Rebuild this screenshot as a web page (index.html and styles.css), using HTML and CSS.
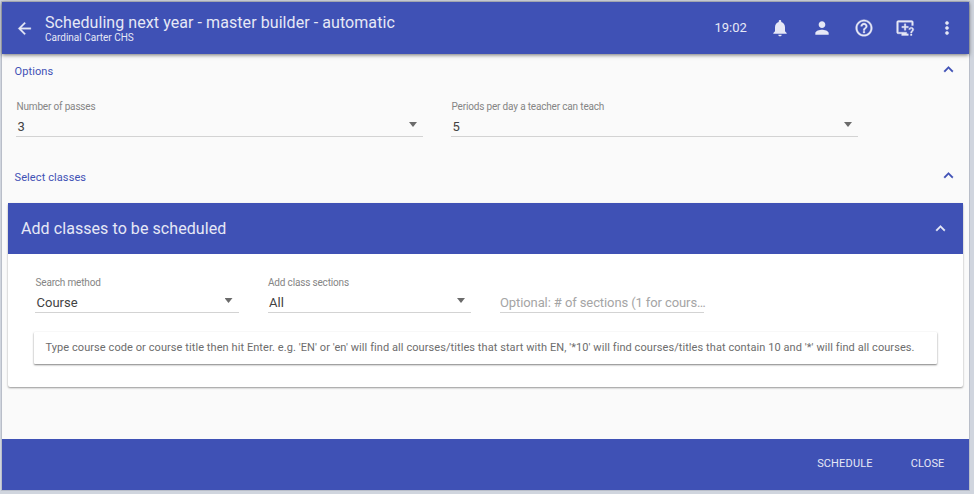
FILE: index.html
```html
<!DOCTYPE html>
<html lang="en">
<head>
<meta charset="utf-8">
<title>Scheduling next year</title>
<link rel="stylesheet" href="styles.css">
</head>
<body>
<div class="window">
  <header class="toolbar">
    <svg class="back" viewBox="0 0 24 24"><path d="M20 11H7.83l5.59-5.59L12 4l-8 8 8 8 1.41-1.41L7.83 13H20v-2z"/></svg>
    <div class="titles">
      <h1 class="title"><span>Scheduling next year - master builder - automatic</span></h1>
      <div class="subtitle"><span>Cardinal Carter CHS</span></div>
    </div>
    <span class="clock">19:02</span>
    <nav class="actions">
      <svg viewBox="0 0 24 24"><path d="M12 22c1.1 0 2-.9 2-2h-4c0 1.1.89 2 2 2zm6-6v-5c0-3.07-1.64-5.64-4.5-6.32V4c0-.83-.67-1.5-1.5-1.5s-1.5.67-1.5 1.5v.68C7.63 5.36 6 7.92 6 11v5l-2 2v1h16v-1l-2-2z"/></svg>
      <svg viewBox="0 0 24 24"><path d="M12 12c2.21 0 4-1.79 4-4s-1.79-4-4-4-4 1.79-4 4 1.79 4 4 4zm0 2c-2.67 0-8 1.34-8 4v2h16v-2c0-2.66-5.33-4-8-4z"/></svg>
      <svg class="bold" viewBox="0 0 24 24"><path d="M11 18h2v-2h-2v2zm1-16C6.48 2 2 6.48 2 12s4.48 10 10 10 10-4.48 10-10S17.52 2 12 2zm0 18c-4.41 0-8-3.59-8-8s3.59-8 8-8 8 3.59 8 8-3.59 8-8 8zm0-14c-2.21 0-4 1.79-4 4h2c0-1.1.9-2 2-2s2 .9 2 2c0 2-3 1.75-3 5h2c0-2.25 3-2.5 3-5 0-2.21-1.79-4-4-4z"/></svg>
      <svg class="bold" viewBox="0 0 24 24"><path d="M4 3h16c1.100 0 2 .9 2 2v4h-2V5H4v12h10v2h2v2H8v-2H4c-1.100 0-2-.9-2-2V5c0-1.100.9-2 2-2z"/><path d="M11.200 7h1.800v3h3v1.800h-3v3h-1.800v-3h-3V10h3z"/><path d="M19.500 11c-1.800 0-3 1.200-3 2.900h1.800c0-.7.500-1.200 1.200-1.200s1.200.5 1.200 1.200c0 1.300-2.100 1.700-2.100 4.200h1.800c0-1.700 2.100-2.100 2.100-4.200 0-1.700-1.200-2.900-3-2.900zM18.600 19.300h1.800V21h-1.800z"/></svg>
      <svg class="bold" viewBox="0 0 24 24"><path d="M12 8c1.1 0 2-.9 2-2s-.9-2-2-2-2 .9-2 2 .9 2 2 2zm0 2c-1.1 0-2 .9-2 2s.9 2 2 2 2-.9 2-2-.9-2-2-2zm0 6c-1.1 0-2 .9-2 2s.9 2 2 2 2-.9 2-2-.9-2-2-2z"/></svg>
    </nav>
  </header>

  <main class="content">
    <div class="section">
      <span class="section-name">Options</span>
      <svg class="chevron" viewBox="0 0 24 24"><path d="M12 8l-6 6 1.410 1.410L12 10.830l4.590 4.580L18 14z"/></svg>
    </div>
    <div class="fields wide">
      <div class="field">
        <span class="label">Number of passes</span>
        <div class="value"><span>3</span><i class="caret"></i></div>
      </div>
      <div class="field">
        <span class="label">Periods per day a teacher can teach</span>
        <div class="value"><span>5</span><i class="caret"></i></div>
      </div>
    </div>
    <div class="section">
      <span class="section-name select">Select classes</span>
      <svg class="chevron" viewBox="0 0 24 24"><path d="M12 8l-6 6 1.410 1.410L12 10.830l4.590 4.580L18 14z"/></svg>
    </div>

    <section class="card">
      <div class="card-head">
        <h2 class="card-title">Add classes to be scheduled</h2>
        <svg class="chevron" viewBox="0 0 24 24"><path d="M12 8l-6 6 1.410 1.410L12 10.830l4.590 4.580L18 14z"/></svg>
      </div>
      <div class="fields narrow">
        <div class="field">
          <span class="label">Search method</span>
          <div class="value"><span>Course</span><i class="caret"></i></div>
        </div>
        <div class="field">
          <span class="label">Add class sections</span>
          <div class="value"><span>All</span><i class="caret"></i></div>
        </div>
        <div class="field">
          <span class="label"></span>
          <div class="value placeholder"><span>Optional: # of sections (1 for cours…</span></div>
        </div>
      </div>
      <div class="search"><span>Type course code or course title then hit Enter. e.g. 'EN' or 'en' will find all courses/titles that start with EN, '*10' will find courses/titles that contain 10 and '*' will find all courses.</span></div>
    </section>
  </main>

  <footer class="footer">
    <span class="button">SCHEDULE</span>
    <span class="button">CLOSE</span>
  </footer>
</div>
</body>
</html>
```
FILE: styles.css
```css
* { box-sizing: border-box; }

body {
  margin: 0;
  height: 494px;
  padding: 2px 5px 4px 2px;
  background: #d0d5de;
  font-family: Roboto, sans-serif;
  overflow: hidden;
}

.window {
  height: 488px;
  width: 967px;
  display: flex;
  flex-direction: column;
  background: #fafafa;
  box-shadow: 0 0 0 1px #b9bec9;
}

.toolbar {
  flex: none;
  height: 52px;
  display: flex;
  align-items: center;
  padding: 0 12px 0 12.5px;
  background: #3f51b5;
  box-shadow: 0 1px 4px rgba(0, 0, 0, .55);
  color: #e6e8f6;
  z-index: 1;
}

svg { fill: currentColor; display: block; flex: none; }
.back { width: 19px; height: 19px; stroke: currentColor; stroke-width: .4; }
.titles { margin-left: 11.5px; flex: 1; white-space: nowrap; }
.title { margin: 0; font-size: 16px; font-weight: 400; line-height: 19px; letter-spacing: .07px; }
.subtitle { font-size: 10px; line-height: 11px; }
.clock { font-size: 13px; margin-top: -1px; }
.actions { display: flex; margin-left: 23.5px; gap: 21.7px; }
.actions svg { width: 20px; height: 20px; }
.bold { stroke: currentColor; stroke-width: .4; }

.content { flex: 1; padding: 0 6px; }

.section {
  height: 34px;
  display: flex;
  align-items: center;
  justify-content: space-between;
  padding: 0 5px 0 6.5px;
  color: #3f51b5;
}
.section-name { font-size: 11px; white-space: nowrap; letter-spacing: .1px; }
.chevron { width: 19px; height: 19px; margin-bottom: 3px; stroke: currentColor; stroke-width: .4; }

.fields { display: flex; }
.wide { height: 72px; padding: 13px 0 0 8px; gap: 28px; }
.wide .field { width: 407px; }
.narrow { height: 78px; padding: 23px 0 0 27px; gap: 29px; }
.narrow .field { width: 203.5px; }

.label {
  display: block;
  height: 12px;
  padding-left: .5px;
  font-size: 10px;
  letter-spacing: -.17px;
  line-height: 12px;
  color: #858585;
  white-space: nowrap;
}
.value {
  height: 24px;
  padding: 5px 6px 0 1.5px;
  display: flex;
  justify-content: space-between;
  border-bottom: 1px solid #d3d3d3;
  color: #424242;
  font-size: 13px;
  line-height: 18px;
  white-space: nowrap;
}
.placeholder { padding-left: 0; font-size: 13px; letter-spacing: -.1px; color: #a5a5a5; }
.caret {
  width: 8px;
  height: 5px;
  margin-top: 4px;
  background: #6b6b6b;
  clip-path: polygon(0 0, 100% 0, 50% 100%);
}

.card {
  height: 184px;
  width: 955px;
  margin-top: 9px;
  background: #fff;
  border-radius: 2px;
  box-shadow: 0 1px 2px rgba(0, 0, 0, .4);
}
.card-head {
  height: 51px;
  display: flex;
  align-items: center;
  justify-content: space-between;
  padding: 0 13px;
  background: #3f51b5;
  color: #e6e8f6;
}
.card-head .chevron { margin-bottom: 1px; }
.card-title { margin: 0; font-size: 16px; font-weight: 400; letter-spacing: .07px; }

.search {
  margin: 0 26px;
  height: 32px;
  padding: 0 0 1px 11.5px;
  display: flex;
  align-items: center;
  border-radius: 1px;
  box-shadow: 0 1px 2px rgba(0, 0, 0, .5);
  color: #6d6d6d;
  font-size: 11px;
  letter-spacing: .075px;
  white-space: nowrap;
}

.footer {
  flex: none;
  height: 51px;
  display: flex;
  align-items: center;
  justify-content: flex-end;
  gap: 38px;
  padding: 0 24.5px 2px 0;
  background: #3f51b5;
  color: #e6e8f6;
  font-size: 11px;
  letter-spacing: .15px;
}
```
